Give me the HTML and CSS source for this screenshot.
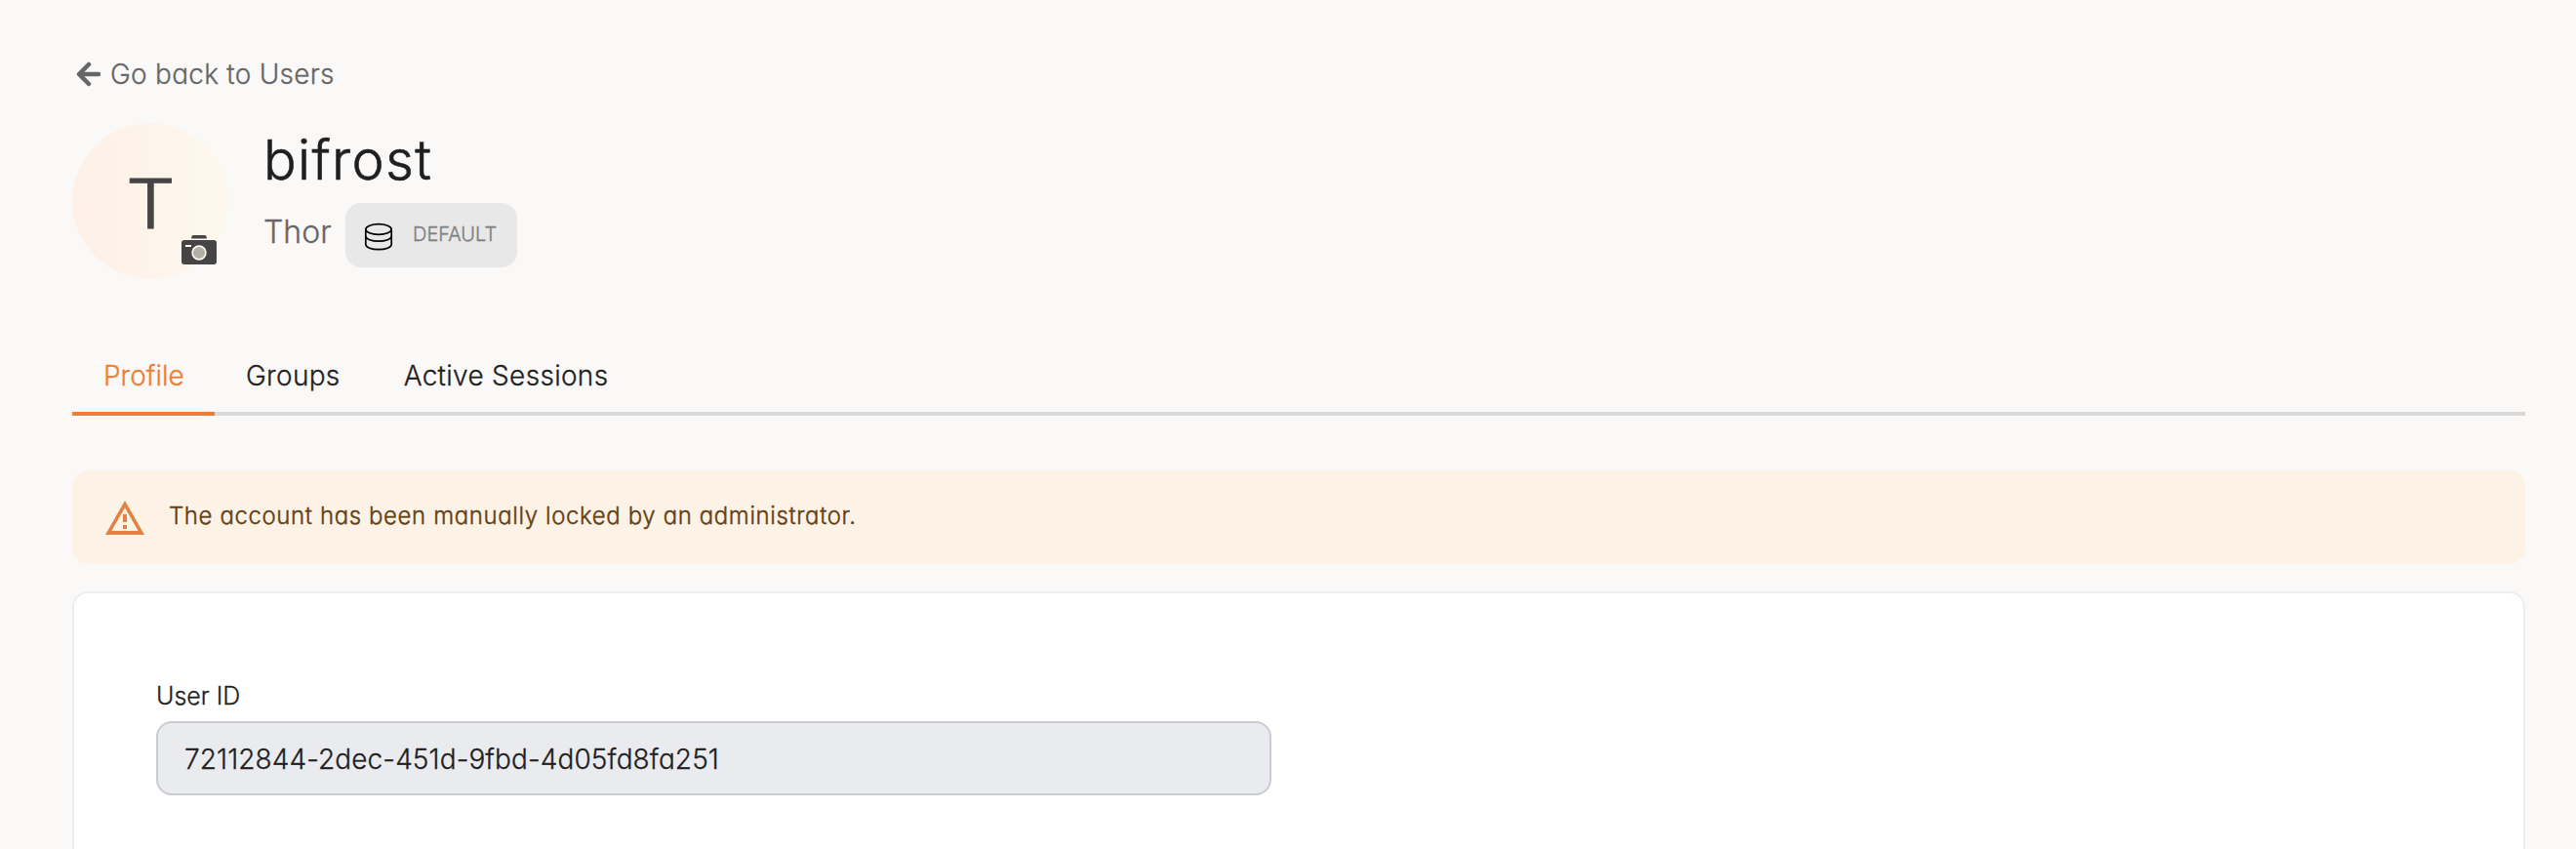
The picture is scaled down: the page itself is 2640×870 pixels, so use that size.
FILE: index.html
```html
<!DOCTYPE html>
<html lang="en">
<head>
<meta charset="utf-8">
<title>bifrost</title>
<link rel="stylesheet" href="styles.css">
</head>
<body>
<main class="page">
  <a class="back">
    <svg class="back-icon" width="26" height="26" viewBox="0 0 26 26"><path d="M13 3 3 13l10 10M3.500 13H23" /></svg>
    <span class="back-label">Go back to Users</span>
  </a>
  <header class="user">
    <div class="avatar">
      <span class="initial">T</span>
      <svg class="camera" width="36" height="30" viewBox="0 0 36 30">
        <path d="M12 0h12q1.500 0 2 3.500H10Q10.500 0 12 0z" fill="#454545"/>
        <rect y="5" width="36" height="25" rx="3" fill="#454545"/>
        <rect x="4" y="10" width="6" height="2" fill="#fff8ee"/>
        <circle cx="18" cy="18" r="6.900" fill="#b3b0a9" stroke="#fff8ee" stroke-width="1.600"/>
      </svg>
    </div>
    <div class="identity">
      <h1 class="name">bifrost</h1>
      <div class="meta">
        <span class="nick">Thor</span>
        <div class="badge">
          <svg class="db" width="30" height="30" viewBox="0 0 30 30"><ellipse cx="15" cy="7" rx="13.200" ry="5.300"/><path d="M1.800 7v15.500c0 2.900 5.900 5.200 13.200 5.200s13.200-2.300 13.200-5.200V7M1.800 14c0 2.900 5.900 5.200 13.200 5.200s13.200-2.300 13.200-5.200"/></svg>
          <span class="store">DEFAULT</span>
        </div>
      </div>
    </div>
  </header>
  <nav class="tabs">
    <a class="tab active">Profile</a>
    <a class="tab">Groups</a>
    <a class="tab">Active Sessions</a>
  </nav>
  <div class="alert">
    <svg class="warn" width="40" height="35" viewBox="0 0 40 35"><path fill-rule="evenodd" d="M20 0 40 35H0zM20 7.300 6.300 31h27.400z"/><path d="M18 14h4v8h-4zM18 25h4v4h-4z"/></svg>
    <span class="alert-text">The account has been manually locked by an administrator.</span>
  </div>
  <section class="card">
    <label class="label">User ID</label>
    <div class="input">72112844-2dec-451d-9fbd-4d05fd8fa251</div>
  </section>
</main>
</body>
</html>
```
FILE: styles.css
```css
* { box-sizing: border-box; }
body {
  margin: 0;
  height: 870px;
  overflow: hidden;
  background: #faf9f8;
  color: #1f1f1f;
  font-family: Inter, "Liberation Sans", sans-serif;
  font-feature-settings: "cv11";
  font-weight: 300;
  -webkit-text-stroke: 0.3px currentColor;
}
.page { padding: 56px 52px 0 74px; }
.back { display: flex; align-items: center; height: 40px; padding-left: 4px; color: #666; }
.back-icon { fill: none; stroke: #666; stroke-width: 4.500; stroke-linecap: round; stroke-linejoin: round; }
.back-label { margin-left: 9px; font-size: 28px; line-height: 40px; letter-spacing: 0.25px; }
.user { display: flex; margin-top: 30px; gap: 36px; height: 160px; }
.avatar {
  position: relative;
  display: flex;
  align-items: center;
  justify-content: center;
  width: 160px;
  height: 160px;
  padding-top: 5px;
  border-radius: 50%;
  background: linear-gradient(90deg, #fdf0e7, #fdf8ed);
  color: #454545;
}
.initial { font-size: 70px; line-height: 80px; transform: scaleX(1.14); -webkit-text-stroke: 0.8px currentColor; }
.camera { position: absolute; left: 112px; top: 115px; }
.identity { display: flex; flex-direction: column; padding-top: 6px; }
.name { margin: 0; font-size: 56px; line-height: 64px; font-weight: 300; letter-spacing: 1.3px; -webkit-text-stroke: 0.6px currentColor; }
.meta { display: flex; align-items: center; gap: 14px; margin-top: 12px; }
.nick { width: 70px; padding-bottom: 6px; font-size: 32px; line-height: 40px; color: #666; }
.badge { display: flex; align-items: center; width: 176px; height: 66px; padding: 4px 0 0 19px; border-radius: 16px; background: #e8e8e8; }
.db { fill: none; stroke: #000; stroke-width: 1.700; }
.store { margin-left: 20px; padding-bottom: 6px; font-size: 20px; color: #808080; }
.tabs { display: flex; margin-top: 56px; height: 84px; border-bottom: 4px solid #d9d9d9; font-size: 28px; letter-spacing: 0.3px; }
.tab { height: 84px; padding: 23px 33px 0 32px; line-height: 40px; }
.active { width: 146px; border-bottom: 4px solid #f07d30; color: #f07d30; letter-spacing: 0; }
.alert { display: flex; align-items: center; height: 96px; margin-top: 56px; padding-left: 34px; border-radius: 16px; background: #fdf2e6; color: #633f13; }
.warn { fill: #e28142; }
.alert-text { margin-left: 25px; padding-bottom: 3px; font-size: 24px; line-height: 32px; letter-spacing: 0.6px; -webkit-text-stroke: 0.4px currentColor; }
.card { height: 300px; margin-top: 28px; padding: 88px 84px; border: 2px solid #ebedef; border-radius: 16px; background: #fff; }
.label { display: block; height: 43px; font-size: 25px; line-height: 34px; }
.input { display: flex; align-items: center; width: 1143px; height: 76px; padding: 2px 0 0 27px; border: 2px solid #caccd1; border-radius: 16px; background: #eaebef; font-size: 28px; letter-spacing: 0.1px; }
```
